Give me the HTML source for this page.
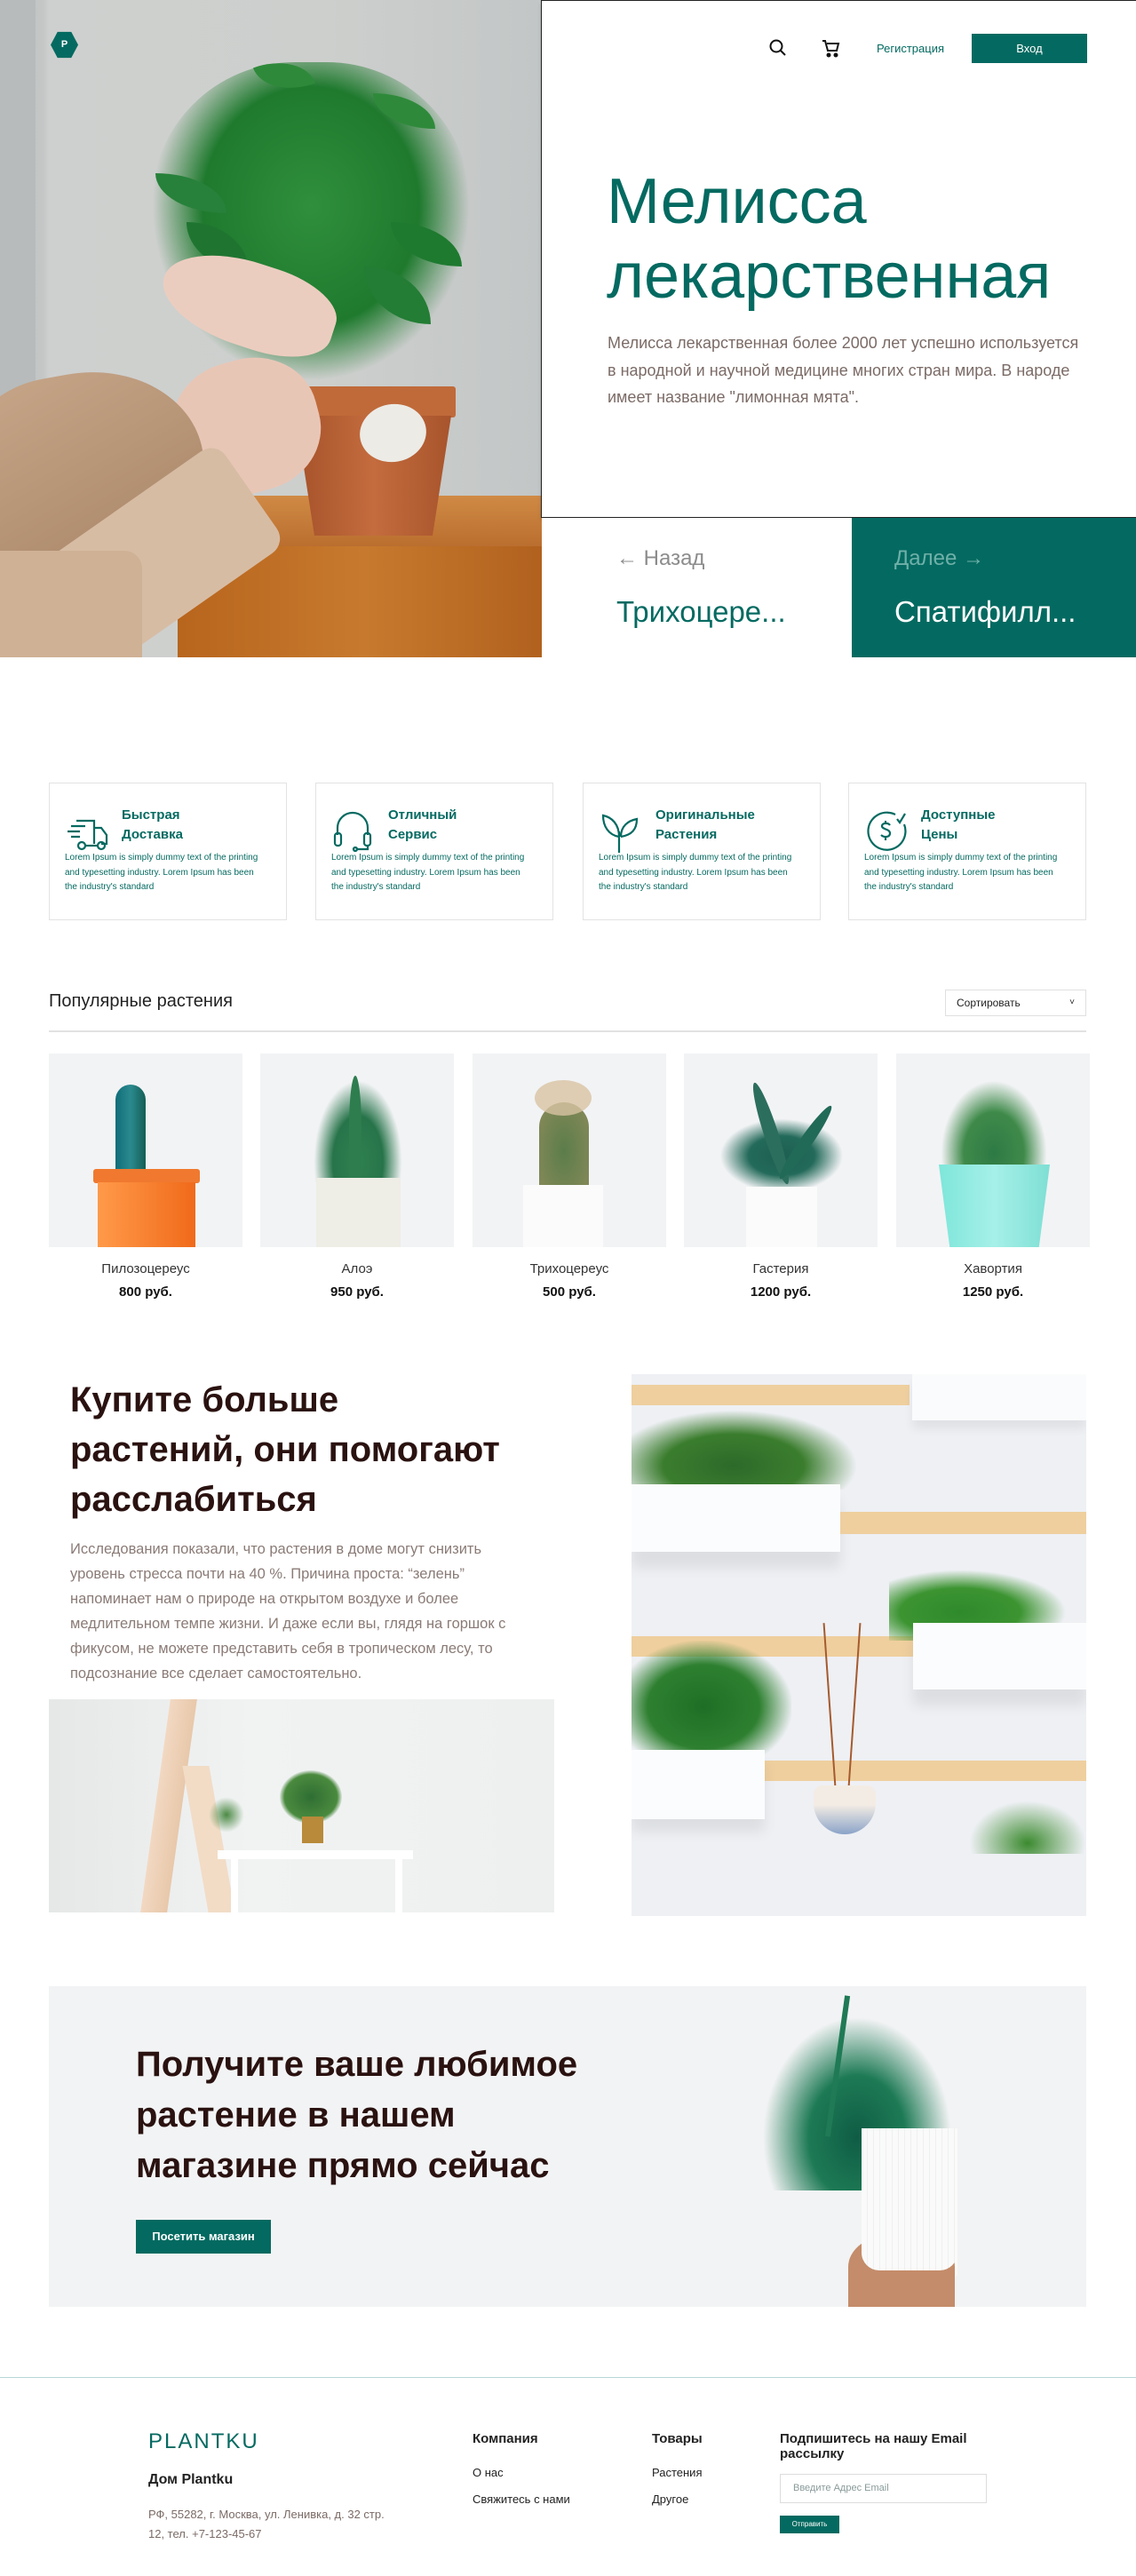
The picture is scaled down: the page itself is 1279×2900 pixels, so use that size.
<!DOCTYPE html>
<html><head><meta charset="utf-8"><style>
*{margin:0;padding:0;box-sizing:border-box}
body{width:1279px;height:2900px;background:#fff;font-family:"Liberation Sans",sans-serif;position:relative;overflow:hidden;color:#2a1512}
.a{position:absolute}
.teal{color:#046a61}
.feat{position:absolute;top:881px;width:268px;height:155px;border:1px solid #e3e3e3;background:#fff}
.feat svg{position:absolute;left:18px;top:30px}
.feat h4{position:absolute;left:81px;top:25px;font-size:15px;line-height:22px;color:#046a61;font-weight:bold}
.feat p{position:absolute;left:17px;top:76px;width:218px;font-size:10px;line-height:16.5px;color:#046a61}
.prod{position:absolute;top:1186px;width:218px}
.prod .img{height:218px;background:#f2f3f5;position:relative;overflow:hidden}
.prod .n{text-align:center;font-size:15px;color:#333;margin-top:16px}
.prod .p{text-align:center;font-size:15px;font-weight:bold;color:#111;margin-top:9px}
.leaf{position:absolute;border-radius:0 100% 0 100%;background:#2e8a3a}
</style></head><body>

<!-- HERO IMAGE -->
<div class="a" style="left:0;top:0;width:612px;height:740px;background:linear-gradient(90deg,#b8bdbd 0,#c4c7c6 8%,#ced0cf 9%,#cdcfcd 60%,#c2c6c6 100%);overflow:hidden">
  <div class="a" style="left:0;top:0;width:40px;height:470px;background:#b7bbbb"></div>
  <div class="a" style="left:215px;top:558px;width:400px;height:60px;background:linear-gradient(#d08a45,#b96d2e)"></div>
  <div class="a" style="left:200px;top:615px;width:420px;height:130px;background:linear-gradient(90deg,#b8651d,#c77a2e,#b0601d)"></div>
  <!-- plant leaves -->
  <div class="a" style="left:170px;top:70px;width:360px;height:360px;border-radius:45% 45% 30% 30%;background:radial-gradient(ellipse at 50% 45%,#2f8f3c 0,#1f7a2e 48%,rgba(31,122,46,0) 70%)"></div>
  <div class="leaf" style="left:290px;top:65px;width:60px;height:40px;transform:rotate(-20deg)"></div>
  <div class="leaf" style="left:420px;top:105px;width:70px;height:40px"></div>
  <div class="leaf" style="left:175px;top:195px;width:80px;height:45px;background:#27813a"></div>
  <div class="leaf" style="left:440px;top:250px;width:80px;height:50px;background:#1e7a2f"></div>
  <div class="leaf" style="left:210px;top:250px;width:70px;height:55px;background:#1f7530"></div>
  <div class="leaf" style="left:410px;top:300px;width:75px;height:65px;background:#237d34"></div>
  <!-- pot -->
  <div class="a" style="left:328px;top:435px;width:185px;height:35px;background:#c06a3a;border-radius:3px"></div>
  <div class="a" style="left:333px;top:468px;width:175px;height:135px;background:linear-gradient(90deg,#a6522a,#c46c3e,#a8542c);clip-path:polygon(0 0,100% 0,88% 100%,12% 100%)"></div>
  <div class="a" style="left:405px;top:455px;width:75px;height:65px;border-radius:50%;background:#ecebe6;transform:rotate(-10deg)"></div>
  <!-- hands/arm -->
  <div class="a" style="left:180px;top:295px;width:200px;height:95px;border-radius:50% 40% 40% 50%;background:#ebcdbf;transform:rotate(18deg)"></div>
  <div class="a" style="left:195px;top:405px;width:165px;height:150px;border-radius:45%;background:#e8c6b6;transform:rotate(-15deg)"></div>
  <div class="a" style="left:-40px;top:420px;width:270px;height:220px;border-radius:40% 50% 20% 0;background:linear-gradient(160deg,#c7a689,#a88566);transform:rotate(-10deg)"></div>
  <div class="a" style="left:10px;top:570px;width:300px;height:140px;background:#d7bca4;transform:rotate(-35deg);border-radius:20px"></div>
  <div class="a" style="left:-20px;top:620px;width:180px;height:140px;background:#cfb195;border-radius:20px"></div>
  <!-- logo -->
  <div class="a" style="left:57px;top:35px;width:31px;height:31px;background:#046a61;clip-path:polygon(25% 3%,75% 3%,100% 50%,75% 97%,25% 97%,0 50%);color:#fff;font-size:11px;font-weight:bold;text-align:center;line-height:31px">P</div>
</div>

<!-- HERO BOX -->
<div class="a" style="left:609px;top:0;width:670px;height:583px;border:1.5px solid #222;border-right:none;background:#fff;box-shadow:0 3px 4px rgba(0,0,0,.15)">
  <svg class="a" style="left:255px;top:42px" width="22" height="22" viewBox="0 0 22 22" fill="none" stroke="#111" stroke-width="2"><circle cx="9" cy="9" r="6.5"/><path d="M14 14l5 5"/></svg>
  <svg class="a" style="left:314px;top:41px" width="24" height="24" viewBox="0 0 24 24" fill="none" stroke="#111" stroke-width="2"><path d="M2 4h3l3 11h10l2-8H7"/><circle cx="9" cy="20" r="1.5" fill="#111"/><circle cx="17" cy="20" r="1.5" fill="#111"/></svg>
  <div class="a teal" style="left:377px;top:46px;font-size:13px">Регистрация</div>
  <div class="a" style="left:484px;top:37px;width:130px;height:33px;background:#046a61;color:#fff;font-size:13px;text-align:center;line-height:33px">Вход</div>
  <div class="a teal" style="left:73px;top:184px;font-size:72px;line-height:84px">Мелисса<br>лекарственная</div>
  <div class="a" style="left:74px;top:370px;width:535px;font-size:18px;line-height:30.5px;color:#7b6b66">Мелисса лекарственная более 2000 лет успешно используется в народной и научной медицине многих стран мира. В народе имеет название "лимонная мята".</div>
</div>
<div class="a" style="left:610px;top:583px;width:349px;height:157px;background:#fff">
  <div class="a" style="left:84px;top:32px;font-size:24px;color:#8c8c8c">← Назад</div>
  <div class="a teal" style="left:84px;top:87px;font-size:33px">Трихоцере...</div>
</div>
<div class="a" style="left:959px;top:583px;width:320px;height:157px;background:#046a61">
  <div class="a" style="left:48px;top:32px;font-size:24px;color:#6fb0a9">Далее →</div>
  <div class="a" style="left:48px;top:87px;font-size:33px;color:#fff">Спатифилл...</div>
</div>

<!-- FEATURES -->
<div class="feat" style="left:55px">
  <svg width="50" height="50" viewBox="0 0 50 50" fill="none" stroke="#046a61" stroke-width="2.2"><path d="M6 18h16M2 24h14M6 30h10M12 12h20v26M32 20h8l6 8v10h-6"/><circle cx="18" cy="40" r="4"/><circle cx="40" cy="40" r="4"/><path d="M22 40h14"/></svg>
  <h4>Быстрая<br>Доставка</h4>
  <p>Lorem Ipsum is simply dummy text of the printing and typesetting industry. Lorem Ipsum has been the industry's standard</p>
</div>
<div class="feat" style="left:355px">
  <svg width="50" height="50" viewBox="0 0 50 50" fill="none" stroke="#046a61" stroke-width="2.2"><path d="M6 28v-8a17 17 0 0 1 34 0v8"/><rect x="3" y="26" width="7" height="14" rx="3"/><rect x="36" y="26" width="7" height="14" rx="3"/><path d="M40 40v4h-12"/><circle cx="26" cy="44" r="2"/></svg>
  <h4>Отличный<br>Сервис</h4>
  <p>Lorem Ipsum is simply dummy text of the printing and typesetting industry. Lorem Ipsum has been the industry's standard</p>
</div>
<div class="feat" style="left:656px">
  <svg width="50" height="50" viewBox="0 0 50 50" fill="none" stroke="#046a61" stroke-width="2.2"><path d="M22 48V24M22 30C10 28 4 18 4 6c10 2 18 10 18 24zM24 30c0-12 8-18 18-20 0 12-6 18-18 20"/></svg>
  <h4>Оригинальные<br>Растения</h4>
  <p>Lorem Ipsum is simply dummy text of the printing and typesetting industry. Lorem Ipsum has been the industry's standard</p>
</div>
<div class="feat" style="left:955px">
  <svg width="50" height="50" viewBox="0 0 50 50" fill="none" stroke="#046a61" stroke-width="2.2"><path d="M34 5A21 21 0 1 0 44 16"/><path d="M36 10l3 4 6-10"/><path d="M28 17c-2-3-9-3-9 1s9 3 9 8-7 5-10 2M23 12v3M23 31v3"/></svg>
  <h4>Доступные<br>Цены</h4>
  <p>Lorem Ipsum is simply dummy text of the printing and typesetting industry. Lorem Ipsum has been the industry's standard</p>
</div>

<!-- POPULAR -->
<div class="a" style="left:55px;top:1116px;font-size:20px;color:#222">Популярные растения</div>
<div class="a" style="left:1064px;top:1114px;width:159px;height:30px;border:1px solid #e0e0e0;font-size:12px;line-height:28px;padding-left:12px;color:#222">Сортировать<span style="position:absolute;right:12px;font-size:10px">˅</span></div>
<div class="a" style="left:55px;top:1160px;width:1168px;height:2px;background:#e2e2e2"></div>

<div class="prod" style="left:55px"><div class="img">
  <div class="a" style="left:75px;top:35px;width:34px;height:120px;border-radius:17px 17px 0 0;background:linear-gradient(90deg,#0f6d7a,#2b8a8e,#145e55)"></div>
  <div class="a" style="left:50px;top:130px;width:120px;height:16px;background:#f0792f;border-radius:3px"></div>
  <div class="a" style="left:55px;top:145px;width:110px;height:75px;background:linear-gradient(90deg,#ff9a4a,#f06a1a)"></div>
</div><div class="n">Пилозоцереус</div><div class="p">800 руб.</div></div>
<div class="prod" style="left:293px"><div class="img">
  <div class="a" style="left:60px;top:30px;width:100px;height:115px;background:radial-gradient(ellipse at 50% 80%,#2f8150 0,#27744a 40%,rgba(40,120,80,0) 70%)"></div>
  <div class="a" style="left:100px;top:25px;width:14px;height:120px;background:#2e7d4f;border-radius:50% 50% 0 0"></div>
  <div class="a" style="left:63px;top:140px;width:95px;height:80px;background:#eeede6"></div>
</div><div class="n">Алоэ</div><div class="p">950 руб.</div></div>
<div class="prod" style="left:532px"><div class="img">
  <div class="a" style="left:75px;top:55px;width:56px;height:110px;border-radius:28px 28px 4px 4px;background:radial-gradient(#5b7d4a,#8a8a5a);"></div>
  <div class="a" style="left:70px;top:30px;width:64px;height:40px;border-radius:50%;background:#d8c3a3;opacity:.8"></div>
  <div class="a" style="left:57px;top:148px;width:90px;height:72px;background:#fbfbfb"></div>
</div><div class="n">Трихоцереус</div><div class="p">500 руб.</div></div>
<div class="prod" style="left:770px"><div class="img">
  <div class="a" style="left:35px;top:70px;width:150px;height:90px;background:radial-gradient(ellipse,#1d5f52 0,#236a5a 35%,rgba(30,100,80,0) 65%)"></div>
  <div class="a" style="left:90px;top:30px;width:16px;height:120px;background:#2c6e5d;transform:rotate(-18deg);border-radius:50%"></div>
  <div class="a" style="left:130px;top:50px;width:14px;height:100px;background:#226a58;transform:rotate(35deg);border-radius:50%"></div>
  <div class="a" style="left:70px;top:150px;width:80px;height:70px;background:#fbfbfb"></div>
</div><div class="n">Гастерия</div><div class="p">1200 руб.</div></div>
<div class="prod" style="left:1009px"><div class="img">
  <div class="a" style="left:50px;top:30px;width:120px;height:110px;background:radial-gradient(ellipse at 50% 75%,#2e7a45 0,#3f8a4a 40%,rgba(60,140,70,0) 70%)"></div>
  <div class="a" style="left:48px;top:125px;width:125px;height:95px;background:linear-gradient(90deg,#7ee6da,#a6f0e8,#7edfd4);clip-path:polygon(0 0,100% 0,90% 100%,10% 100%)"></div>
</div><div class="n">Хавортия</div><div class="p">1250 руб.</div></div>

<!-- SECTION 3 -->
<div class="a" style="left:79px;top:1548px;font-size:40px;line-height:56px;font-weight:bold;color:#2a1210">Купите больше<br>растений, они помогают<br>расслабиться</div>
<div class="a" style="left:79px;top:1730px;width:520px;font-size:16.5px;line-height:28px;color:#8a7b76">Исследования показали, что растения в доме могут снизить уровень стресса почти на 40 %. Причина проста: “зелень” напоминает нам о природе на открытом воздухе и более медлительном темпе жизни. И даже если вы, глядя на горшок с фикусом, не можете представить себя в тропическом лесу, то подсознание все сделает самостоятельно.</div>
<div class="a" style="left:55px;top:1913px;width:569px;height:240px;background:linear-gradient(90deg,#e6e8e8,#f1f3f3 40%,#eef0f0);overflow:hidden">
  <div class="a" style="left:120px;top:0;width:30px;height:240px;background:linear-gradient(90deg,#f2d8c2,#e8c8aa);transform:skewX(-8deg)"></div>
  <div class="a" style="left:165px;top:75px;width:30px;height:165px;background:#f2dcc6;transform:skewX(10deg)"></div>
  <div class="a" style="left:260px;top:80px;width:70px;height:60px;border-radius:50%;background:radial-gradient(#2f6e33,#4a8a3e 60%,rgba(80,140,60,0) 72%)"></div>
  <div class="a" style="left:285px;top:132px;width:24px;height:30px;background:#b88a3a"></div>
  <div class="a" style="left:190px;top:170px;width:220px;height:10px;background:#fff"></div>
  <div class="a" style="left:205px;top:178px;width:8px;height:62px;background:#fff"></div>
  <div class="a" style="left:390px;top:178px;width:8px;height:62px;background:#fff"></div>
  <div class="a" style="left:180px;top:110px;width:40px;height:40px;border-radius:50%;background:radial-gradient(#4c8a45,rgba(80,140,70,0) 70%)"></div>
</div>
<div class="a" style="left:711px;top:1547px;width:512px;height:610px;background:#eef0f4;overflow:hidden">
  <div class="a" style="left:0;top:12px;width:313px;height:23px;background:#efcf9e"></div>
  <div class="a" style="left:316px;top:0;width:196px;height:52px;background:#fafbfc;box-shadow:0 10px 10px rgba(0,0,0,.06)"></div>
  <div class="a" style="left:0;top:40px;width:255px;height:90px;background:radial-gradient(ellipse at 45% 70%,#2c6a2a 0,#3b7d2e 40%,rgba(60,120,40,0) 70%)"></div>
  <div class="a" style="left:0;top:124px;width:235px;height:76px;background:#fbfcfd;box-shadow:0 18px 14px rgba(0,0,0,.08)"></div>
  <div class="a" style="left:235px;top:155px;width:277px;height:25px;background:#efcf9e"></div>
  <div class="a" style="left:0;top:295px;width:317px;height:23px;background:#efcf9e"></div>
  <div class="a" style="left:290px;top:220px;width:200px;height:80px;background:radial-gradient(ellipse at 40% 60%,#2f8a2c 0,#3c9431 40%,rgba(60,150,50,0) 70%)"></div>
  <div class="a" style="left:317px;top:280px;width:195px;height:75px;background:#fbfcfd;box-shadow:0 18px 14px rgba(0,0,0,.08)"></div>
  <div class="a" style="left:150px;top:435px;width:362px;height:23px;background:#efcf9e"></div>
  <div class="a" style="left:0;top:300px;width:180px;height:135px;background:radial-gradient(ellipse at 45% 55%,#1f6e26 0,#2e8030 45%,rgba(50,130,50,0) 72%)"></div>
  <div class="a" style="left:0;top:423px;width:150px;height:78px;background:#fbfcfd;box-shadow:0 14px 14px rgba(0,0,0,.08)"></div>
  <div class="a" style="left:222px;top:280px;width:2px;height:185px;background:#a55a2e;transform:rotate(-4deg)"></div>
  <div class="a" style="left:250px;top:280px;width:2px;height:185px;background:#a55a2e;transform:rotate(4deg)"></div>
  <div class="a" style="left:205px;top:463px;width:70px;height:55px;border-radius:10px 10px 35px 35px;background:linear-gradient(#f3ece4 40%,#8aa3c8)"></div>
  <div class="a" style="left:380px;top:480px;width:132px;height:60px;background:radial-gradient(ellipse at 50% 80%,#3b8a2f 0,rgba(60,140,50,0) 70%)"></div>
</div>

<!-- BANNER -->
<div class="a" style="left:55px;top:2236px;width:1168px;height:361px;background:#f2f3f4;overflow:hidden">
  <div class="a" style="left:98px;top:60px;font-size:40px;line-height:57px;font-weight:bold;color:#2a1210">Получите ваше любимое<br>растение в нашем<br>магазине прямо сейчас</div>
  <div class="a" style="left:98px;top:263px;width:152px;height:38px;background:#046a61;color:#fff;font-size:13px;font-weight:bold;line-height:38px;text-align:center">Посетить магазин</div>
  <div class="a" style="left:800px;top:30px;width:220px;height:200px;background:radial-gradient(ellipse at 50% 70%,#0f5c45 0,#1d7a55 35%,rgba(40,140,90,0) 68%)"></div>
  <div class="a" style="left:885px;top:10px;width:6px;height:160px;background:#1f7a55;transform:rotate(8deg)"></div>
  <div class="a" style="left:915px;top:160px;width:108px;height:170px;background:repeating-linear-gradient(90deg,#fafafa 0,#fafafa 6px,#e3e6e6 7px);border-radius:0 0 8px 8px"></div>
  <div class="a" style="left:900px;top:280px;width:120px;height:90px;border-radius:40% 40% 0 0;background:#c48c6a"></div>
  <div class="a" style="left:915px;top:250px;width:108px;height:70px;background:repeating-linear-gradient(90deg,#fafafa 0,#fafafa 6px,#e3e6e6 7px);border-radius:0 0 20px 20px"></div>
</div>

<!-- FOOTER -->
<div class="a" style="left:0;top:2676px;width:1279px;height:1px;background:#b9d6d6"></div>
<div class="a teal" style="left:167px;top:2735px;font-size:24px;letter-spacing:2px">PLANTKU</div>
<div class="a" style="left:167px;top:2783px;font-size:16px;font-weight:bold;color:#222">Дом Plantku</div>
<div class="a" style="left:167px;top:2820px;font-size:13px;line-height:22px;color:#7b6b66">РФ, 55282, г. Москва, ул. Ленивка, д. 32 стр.<br>12, тел. +7-123-45-67</div>
<div class="a" style="left:532px;top:2737px;font-size:15px;font-weight:bold;color:#222">Компания</div>
<div class="a" style="left:532px;top:2776px;font-size:13px;color:#222">О нас</div>
<div class="a" style="left:532px;top:2806px;font-size:13px;color:#222">Свяжитесь с нами</div>
<div class="a" style="left:734px;top:2737px;font-size:15px;font-weight:bold;color:#222">Товары</div>
<div class="a" style="left:734px;top:2776px;font-size:13px;color:#222">Растения</div>
<div class="a" style="left:734px;top:2806px;font-size:13px;color:#222">Другое</div>
<div class="a" style="left:878px;top:2737px;font-size:15px;font-weight:bold;line-height:17px;color:#222">Подпишитесь на нашу Email<br>рассылку</div>
<div class="a" style="left:878px;top:2785px;width:233px;height:33px;border:1px solid #ddd;font-size:11px;line-height:31px;padding-left:14px;color:#8a9a9a">Введите Адрес Email</div>
<div class="a" style="left:878px;top:2832px;width:67px;height:20px;background:#046a61;color:#fff;font-size:8px;line-height:20px;text-align:center">Отправить</div>
</body></html>
